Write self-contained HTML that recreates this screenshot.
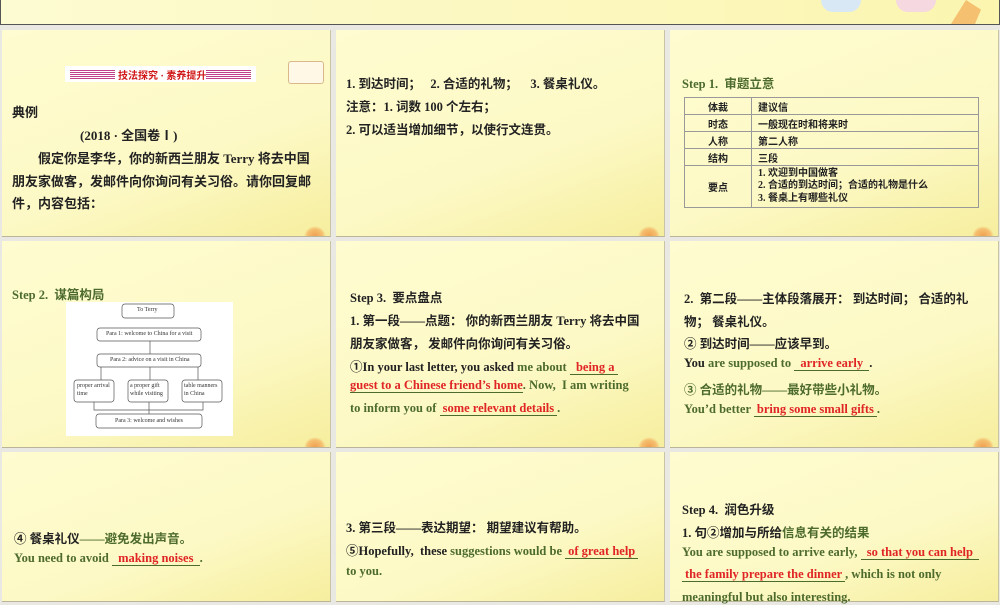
<!DOCTYPE html>
<html><head><meta charset="utf-8"><style>
*{margin:0;padding:0;box-sizing:border-box}
body{width:1000px;height:600px;background:#e9e8e2;position:relative;overflow:hidden;font-family:"Liberation Serif","Noto Sans CJK SC",serif;font-weight:bold;color:#222;font-size:12.5px}
.top{position:absolute;left:0;top:0;width:1000px;height:25px;background:linear-gradient(90deg,#fdfbd2,#fbf5b0);border:1px solid #555;border-top:none}
.p{position:absolute;background:linear-gradient(160deg,#fefcd0 0%,#fdf9c6 60%,#f6ee9e 100%);border-right:1px solid #c9c4a6;border-bottom:1px solid #b9b49a}
.a{position:absolute;white-space:nowrap}
.g{color:#4d6b2c}
.r{color:#e02525;border-bottom:1px solid #4d6b2c;padding:0 3px}
.leaf{position:absolute;right:4px;bottom:0;width:22px;height:10px;background:radial-gradient(ellipse at 50% 100%,#f0a050 0%,#f5c070 50%,transparent 70%)}
table{border-collapse:collapse;font-size:10px;position:absolute;left:684px;top:97px;width:295px}
td{border:1px solid #999;height:17px;padding:0 6px}
td:first-child{width:67px;text-align:center}
</style></head><body>
<div class="top">
<div style="position:absolute;left:820px;top:0;width:40px;height:12px;border-radius:0 0 20px 20px;background:#d8e8f5"></div>
<div style="position:absolute;left:895px;top:0;width:40px;height:12px;border-radius:0 0 20px 20px;background:#f5d8e0"></div>
<div style="position:absolute;left:950px;top:0;width:30px;height:24px;background:#f5c070;clip-path:polygon(0 100%,50% 0,100% 40%,80% 100%)"></div>
</div>

<div class="p" style="left:2px;top:30px;width:329px;height:207px"><div class="leaf"></div></div>
<div class="p" style="left:336px;top:30px;width:329px;height:207px"><div class="leaf"></div></div>
<div class="p" style="left:670px;top:30px;width:329px;height:207px"><div class="leaf"></div></div>
<div class="p" style="left:2px;top:241px;width:329px;height:207px"><div class="leaf"></div></div>
<div class="p" style="left:336px;top:241px;width:329px;height:207px"><div class="leaf"></div></div>
<div class="p" style="left:670px;top:241px;width:329px;height:207px"><div class="leaf"></div></div>
<div class="p" style="left:2px;top:452px;width:329px;height:150px"></div>
<div class="p" style="left:336px;top:452px;width:329px;height:150px"></div>
<div class="p" style="left:670px;top:452px;width:329px;height:150px"></div>

<!-- panel 1 -->
<div class="a" style="left:65px;top:66px;width:191px;height:16px;background:#fff;"></div>
<div class="a" style="left:70px;top:69px;width:45px;height:10px;background:repeating-linear-gradient(#fff 0 1px,#c0408a 1px 2px)"></div>
<div class="a" style="left:206px;top:69px;width:45px;height:10px;background:repeating-linear-gradient(#fff 0 1px,#c0408a 1px 2px)"></div>
<div class="a" style="left:118px;top:67px;font-size:10px;color:#d01818">技法探究 · 素养提升</div>
<div class="a" style="left:288px;top:61px;width:36px;height:23px;border:1px solid #d9b98a;border-radius:3px;background:#fff8e6"></div>
<div class="a" style="left:12px;top:102px;font-size:13px">典例</div>
<div class="a" style="left:80px;top:125px;font-size:13px">(2018 · 全国卷Ⅰ)</div>
<div class="a" style="left:38px;top:148px;font-size:13px">假定你是李华，你的新西兰朋友 Terry 将去中国</div>
<div class="a" style="left:12px;top:171px;font-size:13px">朋友家做客，发邮件向你询问有关习俗。请你回复邮</div>
<div class="a" style="left:12px;top:193px;font-size:13px">件，内容包括：</div>

<!-- panel 2 -->
<div class="a" style="left:346px;top:73px">1. 到达时间；&nbsp;&nbsp; 2. 合适的礼物；&nbsp;&nbsp;&nbsp; 3. 餐桌礼仪。</div>
<div class="a" style="left:346px;top:96px">注意：1. 词数 100 个左右；</div>
<div class="a" style="left:346px;top:119px">2. 可以适当增加细节，以使行文连贯。</div>

<!-- panel 3 -->
<div class="a g" style="left:682px;top:73px">Step 1.&nbsp; 审题立意</div>
<table>
<tr><td>体裁</td><td>建议信</td></tr>
<tr><td>时态</td><td>一般现在时和将来时</td></tr>
<tr><td>人称</td><td>第二人称</td></tr>
<tr><td>结构</td><td>三段</td></tr>
<tr><td style="height:42px">要点</td><td style="line-height:12.5px">1. 欢迎到中国做客<br>2. 合适的到达时间；合适的礼物是什么<br>3. 餐桌上有哪些礼仪</td></tr>
</table>

<!-- panel 4 -->
<div class="a g" style="left:12px;top:284px">Step 2.&nbsp; 谋篇构局</div>
<div class="a" style="left:66px;top:302px;width:167px;height:134px;background:#fff;font-weight:normal;font-size:6px;color:#333">
<svg width="167" height="134" style="position:absolute;left:0;top:0" fill="none" stroke="#555" stroke-width="0.7">
<rect x="56" y="2" width="52" height="14" rx="3"/><rect x="31" y="26" width="104" height="13" rx="3"/>
<rect x="31" y="52" width="104" height="13" rx="3"/><rect x="8" y="78" width="40" height="22" rx="3"/>
<rect x="62" y="78" width="40" height="22" rx="3"/><rect x="116" y="78" width="40" height="22" rx="3"/>
<rect x="30" y="112" width="106" height="14" rx="3"/>
<path d="M84 39V52M35 65V78M84 65V78M132 65V78M28 100V108H137V100M83 100V112"/></svg>
<div class="a" style="left:71px;top:5px">To Terry</div>
<div class="a" style="left:40px;top:29px">Para 1: welcome to China for a visit</div>
<div class="a" style="left:44px;top:55px">Para 2: advice on a visit in China</div>
<div class="a" style="left:11px;top:80px;line-height:8px">proper arrival<br>time</div>
<div class="a" style="left:64px;top:80px;line-height:8px">a proper gift<br>while visiting</div>
<div class="a" style="left:118px;top:80px;line-height:8px">table manners<br>in China</div>
<div class="a" style="left:49px;top:116px">Para 3: welcome and wishes</div>
</div>

<!-- panel 5 -->
<div class="a" style="left:350px;top:287px">Step 3.&nbsp; 要点盘点</div>
<div class="a" style="left:350px;top:310px">1. 第一段——点题： 你的新西兰朋友 Terry 将去中国</div>
<div class="a" style="left:350px;top:333px">朋友家做客， 发邮件向你询问有关习俗。</div>
<div class="a" style="left:350px;top:356px">①In your last letter, you asked <span class="g">me about </span><span class="r">&nbsp;being a</span></div>
<div class="a" style="left:350px;top:378px"><span class="r" style="padding:0">guest to a Chinese friend’s home</span><span class="g">. Now,&nbsp; I am writing</span></div>
<div class="a g" style="left:350px;top:401px">to inform you of <span class="r">some relevant details</span>.</div>

<!-- panel 6 -->
<div class="a" style="left:684px;top:288px">2.&nbsp; 第二段——主体段落展开： 到达时间； 合适的礼</div>
<div class="a" style="left:684px;top:311px">物； 餐桌礼仪。</div>
<div class="a" style="left:684px;top:333px">② 到达时间——应该早到。</div>
<div class="a" style="left:684px;top:356px">You <span class="g">are supposed to </span><span class="r">&nbsp;arrive early&nbsp;</span>.</div>
<div class="a g" style="left:684px;top:379px">③ 合适的礼物——最好带些小礼物。</div>
<div class="a g" style="left:684px;top:402px">You’d better <span class="r">bring some small gifts</span>.</div>

<!-- panel 7 -->
<div class="a" style="left:14px;top:528px">④ 餐桌礼仪<span class="g">——避免发出声音。</span></div>
<div class="a g" style="left:14px;top:551px">You need to avoid <span class="r">&nbsp;making noises&nbsp;</span>.</div>

<!-- panel 8 -->
<div class="a" style="left:346px;top:517px">3. 第三段——表达期望： 期望建议有帮助。</div>
<div class="a" style="left:346px;top:540px">⑤Hopefully,&nbsp; these <span class="g">suggestions would be </span><span class="r">of great help</span></div>
<div class="a g" style="left:346px;top:564px">to you.</div>

<!-- panel 9 -->
<div class="a" style="left:682px;top:499px">Step 4.&nbsp; 润色升级</div>
<div class="a" style="left:682px;top:522px">1. 句②增加与所给<span class="g">信息有关的结果</span></div>
<div class="a g" style="left:682px;top:545px">You are supposed to arrive early, <span class="r">&nbsp;so that you can help&nbsp;</span></div>
<div class="a g" style="left:682px;top:567px"><span class="r">the family prepare the dinner</span>, which is not only</div>
<div class="a g" style="left:682px;top:590px">meaningful but also interesting.</div>
</body></html>
